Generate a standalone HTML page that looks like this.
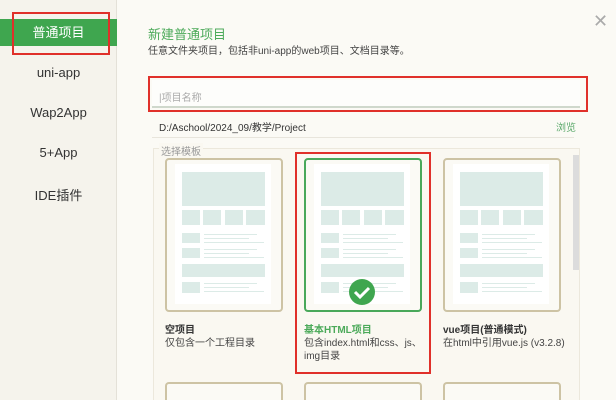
<!DOCTYPE html>
<html><head><meta charset="utf-8"><style>
*{margin:0;padding:0;box-sizing:border-box}
html,body{width:616px;height:400px;overflow:hidden}
body{background:#fbfaf5;font-family:"Liberation Sans","Noto Sans CJK SC",sans-serif;position:relative;color:#333}
.side{position:absolute;left:0;top:0;width:117px;height:400px;background:#f5f3ec;border-right:1px solid #e4e1d8}
.side div{position:absolute;left:0;width:117px;text-align:center;font-size:13px;color:#333}
.act{top:19px;height:27px;line-height:27px;background:#3fa64f;color:#fff!important}
.abs{position:absolute}
.red{position:absolute;border:2px solid #e0302a}
.card{position:absolute;width:118px;height:154px;border:2px solid #cdc3a4;border-radius:4px;background:#fbfaf5}
.card.g{border-color:#49a85a}
.ct{position:absolute;font-size:10px;font-weight:bold;color:#333}
.cd{position:absolute;font-size:10px;color:#444;line-height:13px}
</style></head><body>
<div class="side">
<div class="act">普通项目</div>
<div style="top:65px">uni-app</div>
<div style="top:105px">Wap2App</div>
<div style="top:145px">5+App</div>
<div style="top:185px">IDE插件</div>
</div>
<div class="red" style="left:12px;top:12px;width:98px;height:43px"></div>
<div class="abs" style="left:148px;top:24px;font-size:13px;color:#4caa5a">新建普通项目</div>
<div class="abs" style="left:148px;top:42px;font-size:10px;color:#444">任意文件夹项目，包括非uni-app的web项目、文档目录等。</div>
<div class="abs" style="left:593px;top:12px;font-size:18px;color:#aaa;line-height:18px">✕</div>
<div class="abs" style="left:152px;top:80px;width:428px;height:28px;background:#fdfdfb;border-bottom:2px solid #cfd8cc"></div>
<div class="red" style="left:148px;top:76px;width:440px;height:36px"></div>
<div class="abs" style="left:159px;top:89px;font-size:10px;color:#aaa">|项目名称</div>
<div class="abs" style="left:159px;top:119px;font-size:10px;color:#333">D:/Aschool/2024_09/教学/Project</div>
<div class="abs" style="left:556px;top:119px;font-size:10px;color:#5aa86a">浏览</div>
<div class="abs" style="left:152px;top:137px;width:422px;border-top:1px solid #e8e5dc"></div>
<div class="abs" style="left:153px;top:148px;width:427px;height:252px;border:1px solid #ece8dc;border-bottom:none;background:#faf8f1"></div>
<div class="abs" style="left:159px;top:143px;font-size:10px;color:#999;background:#faf8f1;padding:0 2px">选择模板</div>
<div class="abs" style="left:573px;top:155px;width:6px;height:115px;background:#dcdcdc"></div>
<svg width="0" height="0" style="position:absolute"><defs><g id="t">
<rect x="8" y="4" width="96" height="140" fill="#fff"/>
<g fill="#dcebe7">
<rect x="15" y="12" width="83" height="34"/>
<rect x="15" y="50" width="18" height="15"/><rect x="36" y="50" width="18" height="15"/><rect x="58" y="50" width="18" height="15"/><rect x="79" y="50" width="19" height="15"/>
<rect x="15" y="73" width="18" height="10"/><rect x="37" y="74" width="53" height="1"/><rect x="37" y="78" width="45" height="1"/><rect x="37" y="82" width="60" height="1"/>
<rect x="15" y="88" width="18" height="10"/><rect x="37" y="89" width="53" height="1"/><rect x="37" y="93" width="45" height="1"/><rect x="37" y="97" width="60" height="1"/>
<rect x="15" y="104" width="83" height="13"/>
<rect x="15" y="122" width="18" height="11"/><rect x="37" y="123" width="53" height="1"/><rect x="37" y="127" width="45" height="1"/><rect x="37" y="131" width="60" height="1"/>
</g></g></defs></svg>
<div class="card" style="left:165px;top:158px"><svg width="114" height="150"><use href="#t"/></svg></div>
<div class="card g" style="left:304px;top:158px"><svg width="114" height="150"><use href="#t"/><circle cx="56" cy="132" r="13" fill="#3fa64f"/><path d="M49 132l5 5 9-9" stroke="#fff" stroke-width="3" fill="none"/></svg></div>
<div class="card" style="left:443px;top:158px"><svg width="114" height="150"><use href="#t"/></svg></div>
<div class="ct" style="left:165px;top:321px">空项目</div>
<div class="cd" style="left:165px;top:337px">仅包含一个工程目录</div>
<div class="ct" style="left:304px;top:321px;color:#4caa5a">基本HTML项目</div>
<div class="cd" style="left:304px;top:337px">包含index.html和css、js、<br>img目录</div>
<div class="ct" style="left:443px;top:321px">vue项目(普通模式)</div>
<div class="cd" style="left:443px;top:337px">在html中引用vue.js (v3.2.8)</div>
<div class="card" style="left:165px;top:382px;height:18px;border-bottom:none;border-radius:4px 4px 0 0"></div>
<div class="card" style="left:304px;top:382px;height:18px;border-bottom:none;border-radius:4px 4px 0 0"></div>
<div class="card" style="left:443px;top:382px;height:18px;border-bottom:none;border-radius:4px 4px 0 0"></div>
<div class="red" style="left:295px;top:152px;width:136px;height:222px"></div>
</body></html>
